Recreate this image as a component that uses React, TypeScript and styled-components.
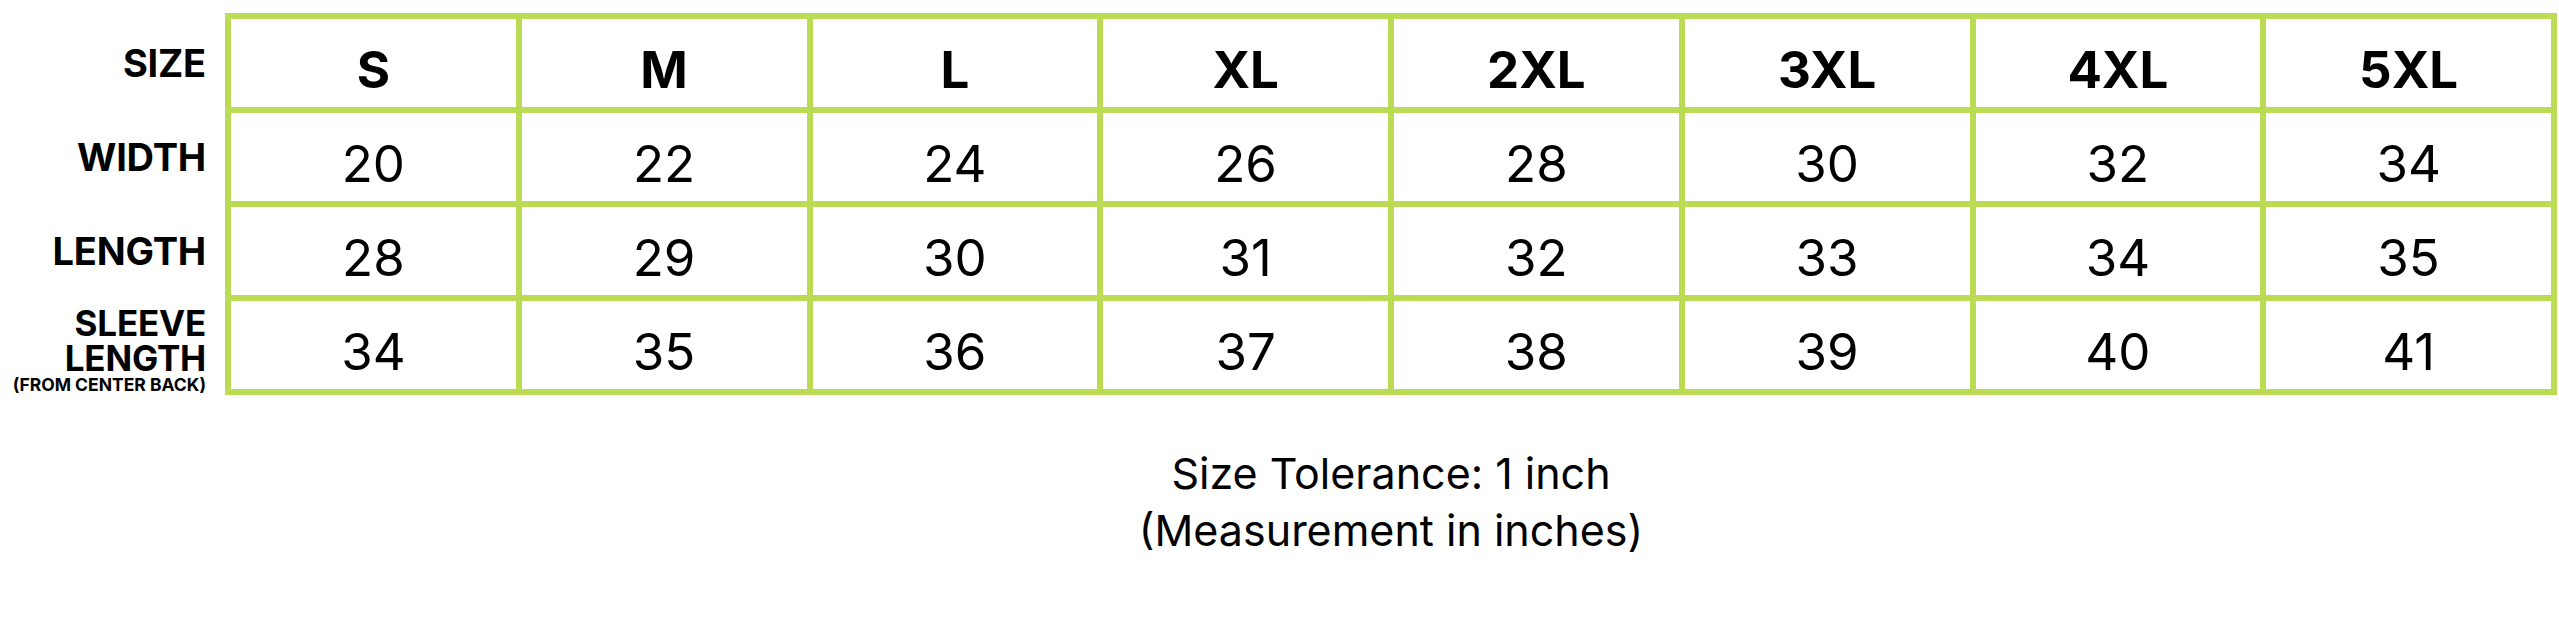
import React from 'react';
import styled, { createGlobalStyle } from 'styled-components';

const LIME = '#bbdb55';
const FONT = `Inter, "Noto Sans", "Liberation Sans", sans-serif`;

const sizes = ['S', 'M', 'L', 'XL', '2XL', '3XL', '4XL', '5XL'];

const rows = [
  [20, 22, 24, 26, 28, 30, 32, 34],
  [28, 29, 30, 31, 32, 33, 34, 35],
  [34, 35, 36, 37, 38, 39, 40, 41],
];

const GlobalStyle = createGlobalStyle`
  html, body {
    margin: 0;
    padding: 0;
    background: #ffffff;
  }
  body {
    font-family: ${FONT};
    color: #000000;
  }
`;

const App = () => (
  <>
    <GlobalStyle />
    <Sheet>
      <Labels>
        <Label>SIZE</Label>
        <Label>WIDTH</Label>
        <Label>LENGTH</Label>
        <Label stacked>
          <span>SLEEVE</span>
          <span>LENGTH</span>
          <Note>(FROM CENTER BACK)</Note>
        </Label>
      </Labels>
      <Table>
        {sizes.map((size) => (
          <Cell key={size} heading>{size}</Cell>
        ))}
        {rows.map((row, r) =>
          row.map((value, c) => <Cell key={`${r}-${c}`}>{value}</Cell>),
        )}
      </Table>
      <Footer>
        <div>Size Tolerance: 1 inch</div>
        <div>(Measurement in inches)</div>
      </Footer>
    </Sheet>
  </>
);

export default App;

const Sheet = styled.div`
  display: grid;
  grid-template-columns: 206px 2332px;
  column-gap: 19px;
  padding-top: 13px;
`;

const Labels = styled.div`
  display: grid;
  grid-template-rows: repeat(4, 88px);
  row-gap: 6px;
  padding: 6px 0;
`;

const Label = styled.div<{ stacked?: boolean }>`
  display: flex;
  flex-direction: column;
  justify-content: center;
  align-items: flex-end;
  text-align: right;
  font-size: ${({ stacked }) => (stacked ? '35px' : '38px')};
  font-weight: 700;
  line-height: ${({ stacked }) => (stacked ? '35px' : '1')};
  letter-spacing: -0.2px;
  white-space: nowrap;
  ${({ stacked }) => stacked && 'padding-top: 10px;'}
`;

const Note = styled.span`
  font-size: 17.5px;
  line-height: 18px;
  letter-spacing: 0;
`;

const Table = styled.div`
  display: grid;
  grid-template-columns: repeat(8, 1fr);
  grid-auto-rows: 88px;
  gap: 6px;
  padding: 6px;
  background: ${LIME};
`;

const Cell = styled.div<{ heading?: boolean }>`
  display: flex;
  align-items: center;
  justify-content: center;
  padding-top: 12px;
  background: #ffffff;
  font-size: 51px;
  font-weight: ${({ heading }) => (heading ? 700 : 400)};
  line-height: 1;
`;

const Footer = styled.div`
  grid-column: 2;
  margin-top: 50px;
  text-align: center;
  font-size: 43px;
  line-height: 57px;
`;
